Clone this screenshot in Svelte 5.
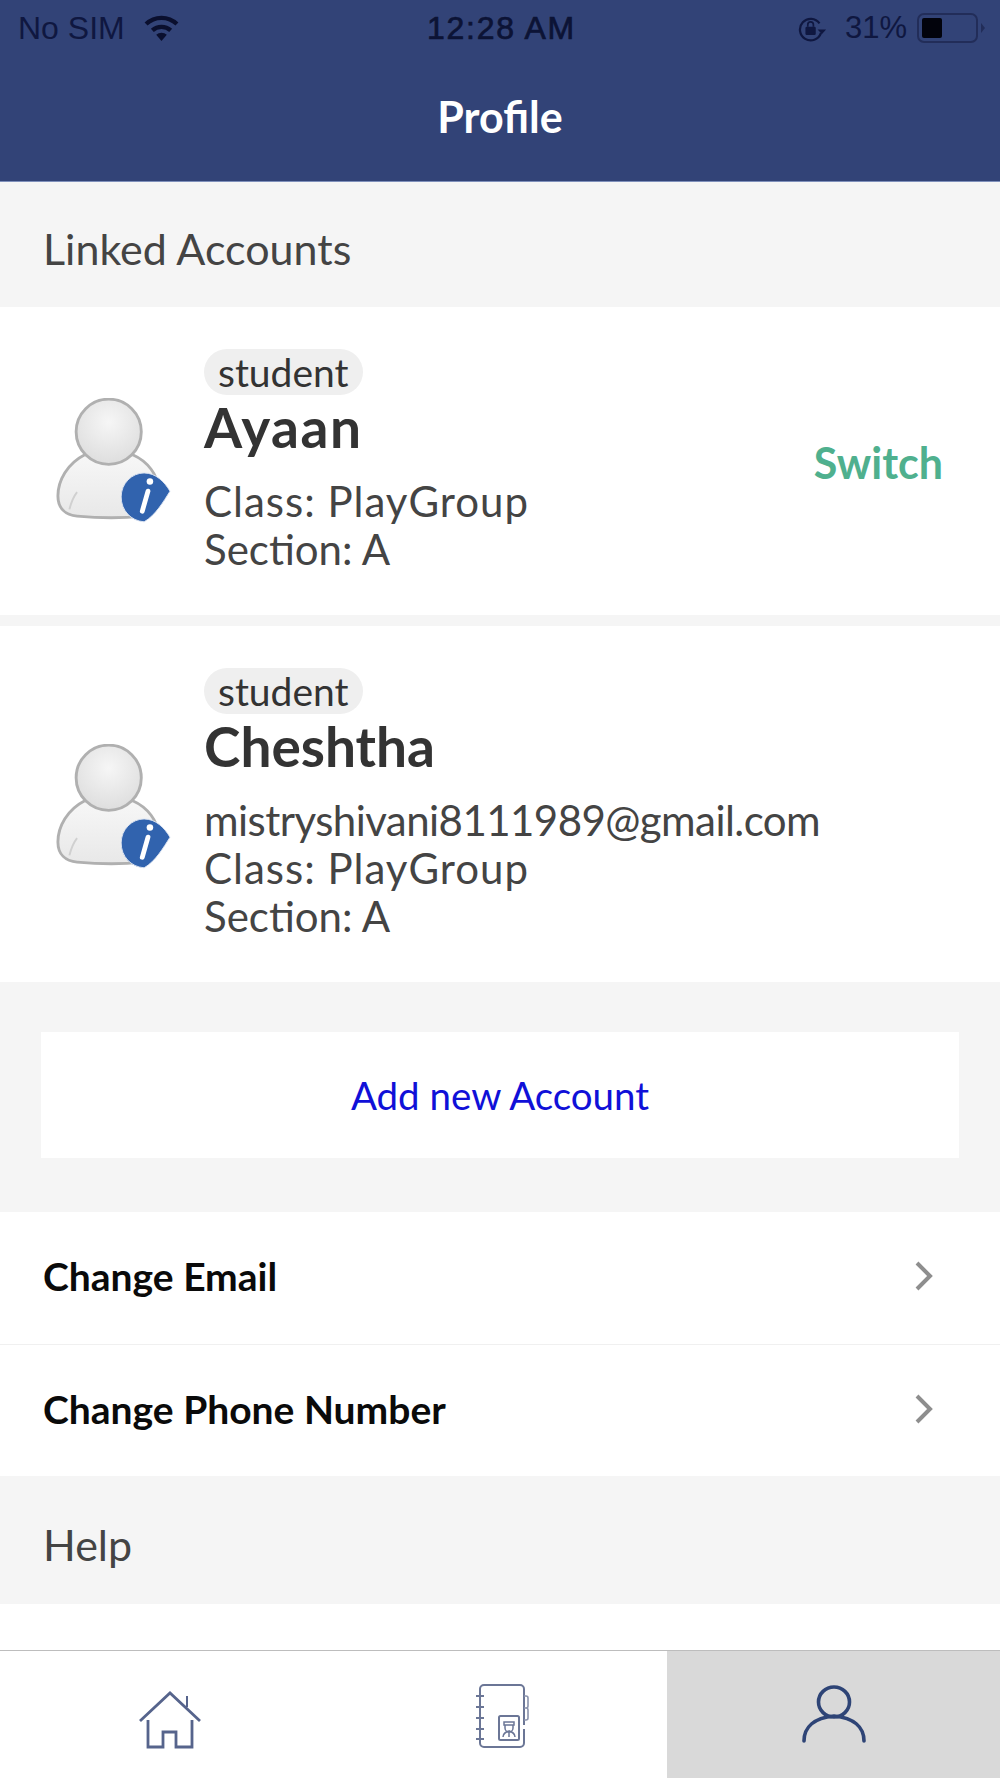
<script>
  const accounts = [
    { name: 'Ayaan', wide: true, lines: [{ t: 'Class: PlayGroup', k: 'cls' }, { t: 'Section: A', k: '' }], action: 'Switch' },
    { name: 'Cheshtha', wide: false, lines: [{ t: 'mistryshivani8111989@gmail.com', k: 'mail' }, { t: 'Class: PlayGroup', k: 'cls' }, { t: 'Section: A', k: '' }] }
  ];
  const links = ['Change Email', 'Change Phone Number'];
</script>

{#snippet avatar()}
  <svg class="avatar" viewBox="0 0 120 130" aria-hidden="true">
    <defs>
      <radialGradient id="headFill" cx="50%" cy="35%" r="70%">
        <stop offset="0" stop-color="#f6f6f6" />
        <stop offset="1" stop-color="#dcdcdc" />
      </radialGradient>
      <linearGradient id="bodyFill" x1="0" y1="0" x2="0" y2="1">
        <stop offset="0" stop-color="#f7f7f7" />
        <stop offset="1" stop-color="#e8e8e8" />
      </linearGradient>
    </defs>
    <path d="M30 59C12 68 2 86 2 102c0 13 8 20 20 21 22 2 50 2 68 0 14-2 20-12 18-27-2-16-12-30-28-37z" fill="url(#bodyFill)" stroke="#b0b0b0" stroke-width="3" />
    <circle cx="55" cy="35" r="34" fill="url(#headFill)" stroke="#b0b0b0" stroke-width="3" />
    <path d="M14 116c2-8 4-13 8-18" fill="none" stroke="#d0d0d0" stroke-width="2" />
    <path d="M92 78C104 78 113 87 119 97C112 108 104 122 92 129C78 128 68 117 68 103C68 89 79 78 92 78z" fill="#3163ae" stroke="#dbe4f1" stroke-width="1" />
    <path d="M96 97l-6 21" stroke="#fff" stroke-width="5" stroke-linecap="round" />
    <circle cx="98" cy="87" r="3.400" fill="#fff" />
  </svg>
{/snippet}

<div class="screen">
  <header class="top">
    <div class="status">
      <div class="status-left">
        <span>No SIM</span>
        <svg class="wifi" viewBox="0 0 38 28" aria-hidden="true">
          <path d="M19 27l-5.500-6.500a8 8 0 0 1 11 0z" fill="#0a0f2e" />
          <path d="M9.500 16a14 14 0 0 1 19 0" fill="none" stroke="#0a0f2e" stroke-width="4.400" />
          <path d="M3 9.400a23 23 0 0 1 32 0" fill="none" stroke="#0a0f2e" stroke-width="4.400" />
        </svg>
      </div>
      <span class="clock">12:28 AM</span>
      <div class="status-right">
        <svg class="lock" viewBox="0 0 32 28" aria-hidden="true">
          <path d="M25.500 18A11.500 11.500 0 1 1 24 7.500" fill="none" stroke="#0f1740" stroke-width="2.400" transform="translate(0 1)" />
          <path d="M22 15h9l-4.500 5z" fill="#0f1740" />
          <rect x="9" y="12" width="11" height="9" rx="1.500" fill="#0f1740" />
          <path d="M11.500 12V10a3 3 0 0 1 6 0v2" fill="none" stroke="#0f1740" stroke-width="1.800" />
        </svg>
        <span class="pct">31%</span>
        <div class="battery"><span class="level"></span></div>
        <span class="nub"></span>
      </div>
    </div>
    <h1>Profile</h1>
  </header>

  <div class="section-label linked">Linked Accounts</div>

  {#each accounts as a, i}
    <article class="account" class:second={i === 1}>
      {@render avatar()}
      <div class="info">
        <span class="role">student</span>
        <div class="name" class:wide={a.wide}>{a.name}</div>
        <div class="lines">
          {#each a.lines as l}<div class={l.k}>{l.t}</div>{/each}
        </div>
      </div>
      {#if a.action}<span class="switch">{a.action}</span>{/if}
    </article>
  {/each}

  <div class="add-wrap">
    <div class="add">Add new Account</div>
  </div>

  <div class="links">
    {#each links as l}
      <div class="link">
        <span>{l}</span>
        <svg class="chev" viewBox="0 0 20 32" aria-hidden="true"><path d="M3 3l13 13L3 29" fill="none" stroke="#8e8e8e" stroke-width="4" /></svg>
      </div>
    {/each}
  </div>

  <div class="section-label help">Help</div>
  <div class="spacer"></div>

  <nav class="tabs">
    <div class="tab">
      <svg class="home" viewBox="0 0 64 58" aria-hidden="true">
        <path d="M2 30L32 2l30 28" fill="none" stroke="#56648c" stroke-width="2.800" />
        <path d="M49 5v11" fill="none" stroke="#56648c" stroke-width="2" />
        <path d="M10 29v27h15V41h13v15h16V29" fill="none" stroke="#56648c" stroke-width="2.800" />
      </svg>
    </div>
    <div class="tab">
      <svg class="book" viewBox="0 0 54 66" aria-hidden="true">
        <path d="M5 10V6a4 4 0 0 1 4-4h36a4 4 0 0 1 4 4v36M49 46v14a4 4 0 0 1-4 4H9a4 4 0 0 1-4-4V10" fill="none" stroke="#6b7696" stroke-width="2" />
        <path d="M1 13h8M1 24h8M1 35h8M1 46h8M1 56h8" stroke="#6b7696" stroke-width="2" />
        <path d="M49 13h2a2 2 0 0 1 2 2v8a2 2 0 0 1-2 2h-2M49 25h2a2 2 0 0 1 2 2v8a2 2 0 0 1-2 2h-2" fill="none" stroke="#8a93ac" stroke-width="1.600" />
        <rect x="24" y="33" width="20" height="24" rx="1.500" fill="none" stroke="#6b7696" stroke-width="2" />
        <path d="M29 39h10v3H29zM30 42v3a4 4 0 0 0 8 0v-3M28 54c0-4 3-5 6-6l0 6M40 54c0-4-3-5-6-6" fill="none" stroke="#6b7696" stroke-width="1.500" />
      </svg>
    </div>
    <div class="tab active">
      <svg class="user" viewBox="0 0 64 58" aria-hidden="true">
        <ellipse cx="32" cy="17" rx="15.500" ry="15" fill="none" stroke="#2e4476" stroke-width="3.600" />
        <path d="M2 56C2 42 12 33 32 31C52 33 62 42 62 56" fill="none" stroke="#2e4476" stroke-width="3.600" stroke-linecap="round" />
      </svg>
    </div>
  </nav>
</div>

<style>
  :global(body) {
    margin: 0;
    background: #fff;
  }
  .screen {
    width: 1000px;
    height: 1778px;
    display: flex;
    flex-direction: column;
    overflow: hidden;
    font-family: Lato, "Open Sans", sans-serif;
    color: #333;
  }
  .top {
    height: 182px;
    box-sizing: border-box;
    background: #324377;
    border-bottom: 1px solid #7f90bb;
    display: flex;
    flex-direction: column;
    flex: none;
  }
  .status {
    height: 56px;
    padding: 0 15px 0 18px;
    box-sizing: border-box;
    display: grid;
    grid-template-columns: 1fr auto 1fr;
    align-items: center;
    font-family: "Liberation Sans", Arial, sans-serif;
    font-size: 32px;
    color: #0f1740;
  }
  .status-left {
    display: flex;
    align-items: center;
    gap: 18px;
  }
  .wifi {
    width: 37px;
    height: 27px;
  }
  .clock {
    color: #0c1335;
    -webkit-text-stroke: 0.7px #0c1335;
    letter-spacing: 1.7px;
  }
  .status-right {
    display: flex;
    align-items: center;
    justify-content: flex-end;
  }
  .lock {
    width: 30px;
    height: 27px;
    margin-right: 18px;
  }
  .pct {
    margin-right: 10px;
    font-size: 31px;
  }
  .battery {
    width: 61px;
    height: 30px;
    box-sizing: border-box;
    border: 2px solid #222d59;
    border-radius: 7px;
    padding: 3px;
    display: flex;
  }
  .level {
    width: 20px;
    background: #02030c;
    border-radius: 2px;
  }
  .nub {
    width: 0;
    height: 0;
    margin-left: 3px;
    border-left: 4px solid #222d59;
    border-top: 5px solid transparent;
    border-bottom: 5px solid transparent;
  }
  h1 {
    margin: 0;
    text-align: center;
    color: #fff;
    font-size: 43px;
    font-weight: 700;
    line-height: 52px;
    margin-top: 35px;
  }
  .section-label {
    background: #f5f5f5;
    font-size: 43px;
    color: #444;
    padding-left: 43px;
    display: flex;
    align-items: center;
    flex: none;
    box-sizing: border-box;
  }
  .linked {
    height: 125px;
    padding-top: 7px;
  }
  .help {
    height: 128px;
    padding-top: 9px;
  }
  .account {
    height: 308px;
    flex: none;
    display: flex;
    align-items: flex-start;
    position: relative;
    padding: 42px 0 0 56px;
    box-sizing: border-box;
  }
  .account.second {
    height: 367px;
    border-top: 11px solid #f5f5f5;
  }
  .avatar {
    width: 115px;
    height: 125px;
    margin-top: 49px;
    flex: none;
  }
  .second .avatar {
    margin-top: 76px;
  }
  .info {
    margin-left: 33px;
    display: flex;
    flex-direction: column;
    align-items: flex-start;
  }
  .role {
    background: #efefef;
    border-radius: 23px;
    height: 46px;
    line-height: 46px;
    padding: 0 14px;
    font-size: 39px;
    color: #333;
  }
  .name {
    font-size: 55px;
    font-weight: 700;
    line-height: 58px;
    color: #333;
    margin-top: 3px;
  }
  .name.wide {
    letter-spacing: 1.5px;
  }
  .lines {
    font-size: 42px;
    line-height: 48px;
    margin-top: 21px;
    color: #444;
  }
  .cls {
    letter-spacing: 1px;
  }
  .mail {
    letter-spacing: -0.55px;
  }
  .switch {
    position: absolute;
    right: 57px;
    top: 130px;
    font-size: 43px;
    font-weight: 700;
    color: #4fb08e;
  }
  .add-wrap {
    background: #f5f5f5;
    height: 230px;
    flex: none;
    padding: 50px 41px 54px;
    box-sizing: border-box;
  }
  .add {
    background: #fff;
    height: 126px;
    display: flex;
    align-items: center;
    justify-content: center;
    font-size: 38.500px;
    color: #1010d8;
  }
  .link {
    height: 132px;
    box-sizing: border-box;
    padding: 0 66px 4px 43px;
    display: flex;
    align-items: center;
    justify-content: space-between;
    font-size: 39px;
    font-weight: 700;
    color: #0a0a0a;
  }
  .link + .link {
    border-top: 1px solid #f0f0f0;
  }
  .chev {
    width: 20px;
    height: 32px;
  }
  .spacer {
    height: 46px;
    flex: none;
  }
  .tabs {
    height: 128px;
    flex: none;
    box-sizing: border-box;
    border-top: 1px solid #bdbdbd;
    display: grid;
    grid-template-columns: 1fr 1fr 1fr;
  }
  .tab {
    display: flex;
    align-items: center;
    justify-content: center;
  }
  .tab.active {
    background: #d9d9d9;
  }
  .home {
    width: 64px;
    height: 58px;
    position: relative;
    left: 3px;
    top: 5px;
  }
  .book {
    width: 56px;
    height: 66px;
    position: relative;
    top: 1px;
    left: 2px;
  }
  .user {
    width: 64px;
    height: 58px;
    position: relative;
    top: -1px;
    left: 1px;
  }
</style>
